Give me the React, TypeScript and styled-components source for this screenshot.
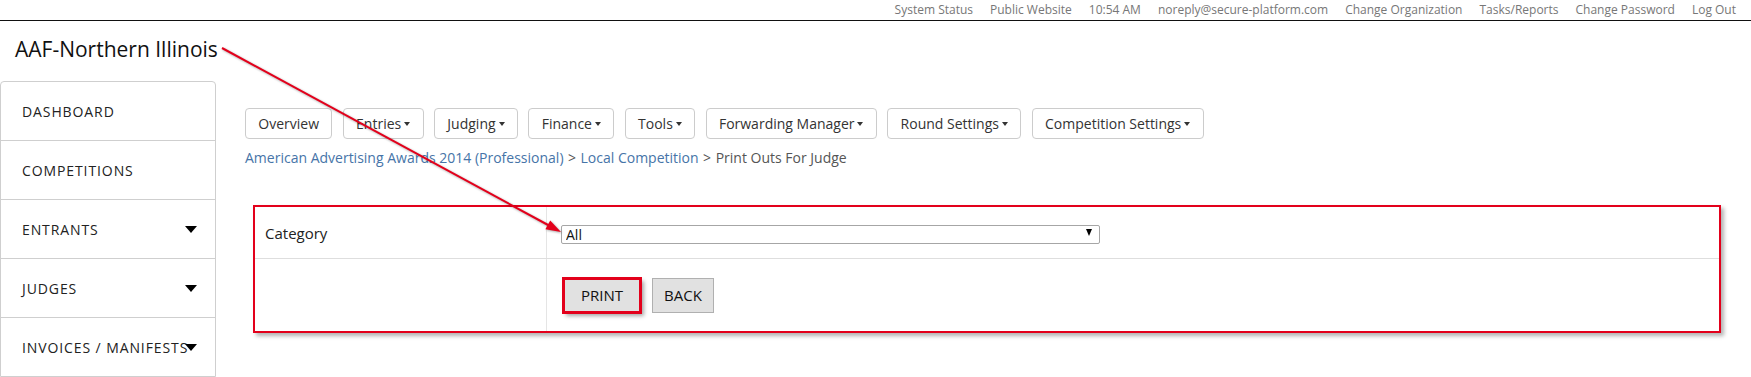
import React from 'react';
import styled, { createGlobalStyle } from 'styled-components';

const GlobalStyle = createGlobalStyle`
  html, body {
    margin: 0;
    padding: 0;
    background: #ffffff;
    font-family: 'Open Sans', 'Liberation Sans', sans-serif;
    color: #333;
  }
`;

const topLinks = [
  'System Status',
  'Public Website',
  '10:54 AM',
  'noreply@secure-platform.com',
  'Change Organization',
  'Tasks/Reports',
  'Change Password',
  'Log Out',
];

const sideItems = [
  { label: 'Dashboard', menu: false },
  { label: 'Competitions', menu: false },
  { label: 'Entrants', menu: true },
  { label: 'Judges', menu: true },
  { label: 'Invoices / Manifests', menu: true },
];

const navButtons = [
  { label: 'Overview', menu: false },
  { label: 'Entries', menu: true },
  { label: 'Judging', menu: true },
  { label: 'Finance', menu: true },
  { label: 'Tools', menu: true },
  { label: 'Forwarding Manager', menu: true },
  { label: 'Round Settings', menu: true },
  { label: 'Competition Settings', menu: true },
];

const App: React.FC = () => {
  return (
    <Page>
      <GlobalStyle />
      <TopBar>
        {topLinks.map((l) => (
          <TopLink key={l}>{l}</TopLink>
        ))}
      </TopBar>
      <OrgTitle>AAF-Northern Illinois</OrgTitle>
      <Body>
        <Sidebar>
          {sideItems.map((item) => (
            <SideItem key={item.label}>
              {item.label}
              {item.menu && <SideCaret />}
            </SideItem>
          ))}
        </Sidebar>
        <Main>
          <ButtonRow>
            {navButtons.map((b) => (
              <NavButton key={b.label}>
                {b.label}
                {b.menu && <Caret />}
              </NavButton>
            ))}
          </ButtonRow>
          <Breadcrumb>
            <CrumbLink>American Advertising Awards 2014 (Professional)</CrumbLink>
            <Sep>&gt;</Sep>
            <CrumbLink>Local Competition</CrumbLink>
            <Sep>&gt;</Sep>
            <span>Print Outs For Judge</span>
          </Breadcrumb>
          <FormTable>
            <FormRow $height={51}>
              <LabelCell>Category</LabelCell>
              <FieldCell>
                <SelectWrap>
                  <Select defaultValue="all">
                    <option value="all">All</option>
                  </Select>
                  <SelectArrow />
                </SelectWrap>
              </FieldCell>
            </FormRow>
            <FormRow $height={72}>
              <LabelCell />
              <FieldCell>
                <Actions>
                  <ActionButton $pad={17} $highlight>PRINT</ActionButton>
                  <ActionButton $pad={11}>BACK</ActionButton>
                </Actions>
              </FieldCell>
            </FormRow>
          </FormTable>
        </Main>
      </Body>
      <Annotation width="1751" height="377" viewBox="0 0 1751 377">
        <g style={{ filter: 'drop-shadow(1px 1px 1px rgba(0,0,0,0.35))' }}>
          <line x1="222" y1="48" x2="549" y2="225.5" stroke="#e3001b" strokeWidth="2" />
          <polygon points="561,232 545.4,229.2 550.2,220.4" fill="#e3001b" />
        </g>
      </Annotation>
    </Page>
  );
};

export default App;

const Page = styled.div`
  position: relative;
  width: 1751px;
  height: 377px;
  overflow: hidden;
`;

const TopBar = styled.div`
  display: flex;
  justify-content: flex-end;
  gap: 17px;
  height: 20px;
  padding-right: 15px;
  border-bottom: 1px solid #111;
`;

const TopLink = styled.a`
  font-size: 12px;
  line-height: 20px;
  color: #777;
  white-space: nowrap;
`;

const OrgTitle = styled.h1`
  margin: 0;
  padding: 14px 0 18px 15px;
  font-size: 21px;
  line-height: 28px;
  font-weight: 400;
  color: #111;
`;

const Body = styled.div`
  display: flex;
  align-items: flex-start;
`;

const Sidebar = styled.nav`
  width: 214px;
  flex: none;
  border: 1px solid #cfcfcf;
  border-radius: 4px 4px 0 0;
  background: #fff;
`;

const SideItem = styled.div`
  position: relative;
  height: 58px;
  padding-left: 21px;
  display: flex;
  align-items: center;
  font-size: 14px;
  letter-spacing: 0.9px;
  text-transform: uppercase;
  color: #222;
  white-space: nowrap;

  & + & {
    border-top: 1px solid #cfcfcf;
  }
`;

const SideCaret = styled.span`
  position: absolute;
  right: 18px;
  top: 50%;
  margin-top: -3px;
  border-top: 7px solid #000;
  border-left: 6.5px solid transparent;
  border-right: 6.5px solid transparent;
`;

const Main = styled.main`
  flex: 1;
  padding: 27px 30px 0 29px;
`;

const ButtonRow = styled.div`
  display: flex;
  gap: 10.5px;
`;

const NavButton = styled.button`
  display: inline-flex;
  align-items: center;
  height: 31px;
  padding: 0 12.3px;
  border: 1px solid #ccc;
  border-radius: 4px;
  background: #fff;
  font-family: 'Open Sans', 'Liberation Sans', sans-serif;
  font-size: 14px;
  color: #333;
  white-space: nowrap;
`;

const Caret = styled.span`
  display: inline-block;
  margin-left: 3px;
  border-top: 4px solid #333;
  border-left: 3.5px solid transparent;
  border-right: 3.5px solid transparent;
`;

const Breadcrumb = styled.div`
  margin-top: 9px;
  font-size: 14px;
  line-height: 20px;
  color: #555;
`;

const CrumbLink = styled.a`
  color: #4674a8;
`;

const Sep = styled.span`
  margin: 0 4.5px;
  color: #555;
`;

const FormTable = styled.div`
  margin: 37px 0 0 8px;
  border: 2px solid #e3001b;
  box-shadow: 3px 3px 4px rgba(0, 0, 0, 0.3);
  background: #fff;
`;

const FormRow = styled.div<{ $height: number }>`
  display: grid;
  grid-template-columns: 292px 1fr;
  height: ${(p) => p.$height}px;

  & + & {
    border-top: 1px solid #dedede;
  }
`;

const LabelCell = styled.div`
  display: flex;
  align-items: center;
  padding-left: 10px;
  border-right: 1px solid #e5e5e5;
  font-size: 15px;
  color: #222;
`;

const FieldCell = styled.div`
  display: flex;
  align-items: center;
  padding-left: 14px;
`;

const SelectWrap = styled.div`
  position: relative;
  width: 539px;
  height: 19px;
`;

const Select = styled.select`
  appearance: none;
  width: 100%;
  height: 100%;
  margin: 0;
  padding: 0 0 0 4px;
  border: 1px solid #a6a6a6;
  border-radius: 2px;
  background: #fff;
  font-family: 'Open Sans', 'Liberation Sans', sans-serif;
  font-size: 14px;
  line-height: 17px;
  color: #111;
`;

const SelectArrow = styled.span`
  position: absolute;
  right: 8px;
  top: 6px;
  border-top: 7px solid #000;
  border-left: 3px solid transparent;
  border-right: 3px solid transparent;
  pointer-events: none;
`;

const Actions = styled.div`
  display: flex;
  gap: 11px;
  padding-left: 2px;
`;

const ActionButton = styled.button<{ $pad: number; $highlight?: boolean }>`
  height: 35px;
  padding: 0 ${(p) => p.$pad}px;
  border: 1px solid #b0b0b0;
  border-radius: 0;
  background: #e1e1e1;
  font-family: 'Open Sans', 'Liberation Sans', sans-serif;
  font-size: 15px;
  color: #111;
  ${(p) =>
    p.$highlight &&
    `
    outline: 3px solid #e3001b;
    outline-offset: -2px;
    box-shadow: 3px 3px 4px rgba(0, 0, 0, 0.35);
  `}
`;

const Annotation = styled.svg`
  position: absolute;
  top: 0;
  left: 0;
  pointer-events: none;
`;
